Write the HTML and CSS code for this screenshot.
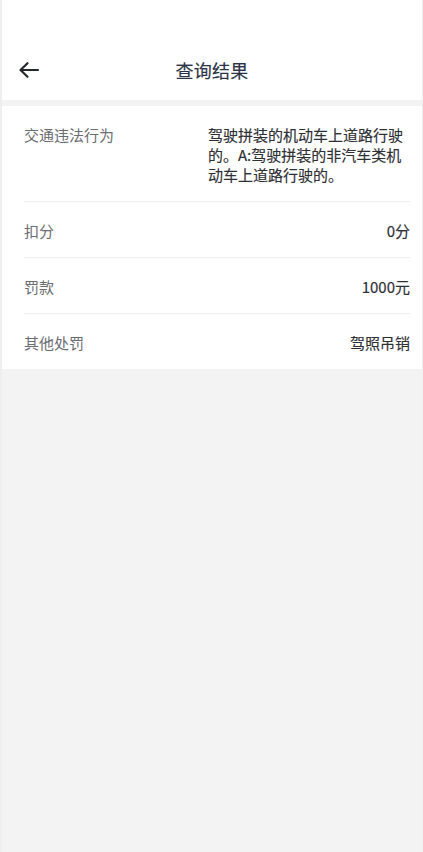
FILE: index.html
```html
<!DOCTYPE html>
<html lang="zh-CN">
<head>
<meta charset="utf-8">
<meta name="viewport" content="width=device-width, initial-scale=1">
<title>查询结果</title>
<link rel="stylesheet" href="styles.css">
</head>
<body>
<div class="app">
  <header class="header">
    <div class="status-bar"></div>
    <div class="nav-bar">
      <button class="back" aria-label="返回">
        <svg width="22" height="18" viewBox="0 0 22 18" fill="none" stroke="#24272c" stroke-width="2.2" stroke-linecap="round" stroke-linejoin="round">
          <path d="M20 9H3"/>
          <path d="M9.5 2.2L2.5 9l7 6.8"/>
        </svg>
      </button>
      <h1 class="title">查询结果</h1>
      <span class="nav-spacer"></span>
    </div>
  </header>
  <section class="card">
    <div class="row">
      <span class="label">交通违法行为</span>
      <span class="value multi">驾驶拼装的机动车上道路行驶的。A:驾驶拼装的非汽车类机动车上道路行驶的。</span>
    </div>
    <div class="row">
      <span class="label">扣分</span>
      <span class="value">0分</span>
    </div>
    <div class="row">
      <span class="label">罚款</span>
      <span class="value">1000元</span>
    </div>
    <div class="row last">
      <span class="label">其他处罚</span>
      <span class="value">驾照吊销</span>
    </div>
  </section>
</div>
</body>
</html>
```
FILE: styles.css
```css
* { box-sizing: border-box; }
html, body {
  margin: 0;
  padding: 0;
  background: #eeeeee;
}
body {
  font-family: "Noto Sans CJK SC", "Noto Sans", "Liberation Sans", sans-serif;
}
.app {
  margin: 0 1px 0 2px;
  min-height: 852px;
  background: #f3f3f3;
}
.header {
  background: #ffffff;
  height: 100px;
  display: flex;
  flex-direction: column;
}
.status-bar {
  height: 45px;
}
.nav-bar {
  height: 50px;
  display: flex;
  align-items: center;
  justify-content: space-between;
  padding: 0 16px;
}
.back {
  border: 0;
  background: none;
  padding: 0;
  width: 30px;
  height: 30px;
  display: flex;
  align-items: center;
  justify-content: flex-start;
  cursor: pointer;
}
.nav-spacer { width: 30px; }
.title {
  margin: 0;
  font-size: 18px;
  font-weight: 400;
  color: #2b3344;
  letter-spacing: 0.3px;
  -webkit-text-stroke: 0.15px #2b3344;
}
.card {
  margin-top: 6px;
  background: #ffffff;
  padding: 0 12px 0 22px;
}
.row {
  display: flex;
  justify-content: space-between;
  align-items: flex-start;
  padding: 19px 0 16px;
  border-bottom: 1px solid #efefef;
  font-size: 15px;
  line-height: 20px;
}
.row.last { border-bottom: 0; }
.label {
  color: #6a6d72;
}
.value {
  color: #2e2f33;
  font-weight: 400;
  -webkit-text-stroke: 0.15px #2e2f33;
  text-align: right;
}
.value.multi {
  max-width: 202px;
  text-align: left;
}
```
